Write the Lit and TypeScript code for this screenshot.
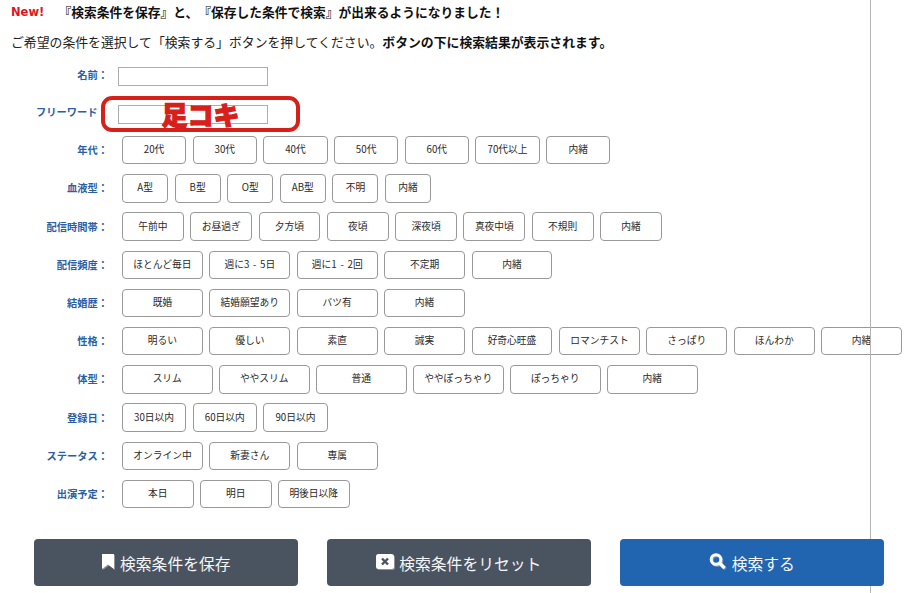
import { LitElement, css, html, svg } from 'lit';
import { customElement } from 'lit/decorators.js';

// each row's chip width lives in a class (w46 etc.), the widths differ per row
const rows = [
  { label: '年代：', size: 'w64', chips: ['20代', '30代', '40代', '50代', '60代', '70代以上', '内緒'] },
  { label: '血液型：', size: 'w46', chips: ['A型', 'B型', 'O型', 'AB型', '不明', '内緒'] },
  { label: '配信時間帯：', size: 'w62', chips: ['午前中', 'お昼過ぎ', '夕方頃', '夜頃', '深夜頃', '真夜中頃', '不規則', '内緒'] },
  { label: '配信頻度：', size: 'w81', chips: ['ほとんど毎日', '週に3 - 5日', '週に1 - 2回', '不定期', '内緒'] },
  { label: '結婚歴：', size: 'w81', chips: ['既婚', '結婚願望あり', 'バツ有', '内緒'] },
  { label: '性格：', size: 'w81', chips: ['明るい', '優しい', '素直', '誠実', '好奇心旺盛', 'ロマンチスト', 'さっぱり', 'ほんわか', '内緒'] },
  { label: '体型：', size: 'w90', chips: ['スリム', 'ややスリム', '普通', 'ややぽっちゃり', 'ぽっちゃり', '内緒'] },
  { label: '登録日：', size: 'w64', chips: ['30日以内', '60日以内', '90日以内'] },
  { label: 'ステータス：', size: 'w81', chips: ['オンライン中', '新妻さん', '専属'] },
  { label: '出演予定：', size: 'w71', chips: ['本日', '明日', '明後日以降'] },
];

const bookmarkIcon = svg`<svg class="icon" width="14" height="15" viewBox="0 0 14 15"><path d="M1 0H13V15L7 10.5L1 15Z" fill="#fff"/></svg>`;
const resetIcon = svg`<svg class="icon" width="18" height="15" viewBox="0 0 18 15"><rect x="0" y="0" width="18" height="15" rx="2.5" fill="#fff"/><path d="M6 4.5L12 10.5M12 4.5L6 10.5" stroke="#4a5360" stroke-width="2.4"/></svg>`;
const searchIcon = svg`<svg class="icon" width="18" height="16" viewBox="0 0 18 16"><circle cx="7" cy="6.5" r="4.8" fill="none" stroke="#fff" stroke-width="3"/><path d="M10.5 10L15.5 15" stroke="#fff" stroke-width="3.4"/></svg>`;

@customElement('app-root')
export class AppRoot extends LitElement {
  static styles = css`
    :host {
      display: block;
      position: relative;
      height: 593px;
      overflow: hidden;
      background: #fff;
      font-family: "Noto Sans CJK JP", "Liberation Sans", sans-serif;
      color: #222;
      text-spacing-trim: space-all;
    }

    .rule {
      position: absolute;
      left: 870px;
      top: 0;
      bottom: 0;
      width: 1px;
      background: #b4b4b4;
    }

    .intro {
      display: flex;
      align-items: center;
      height: 16px;
      margin: 4px 0 14px 11px;
      font-size: 12.75px;
      line-height: 16px;
      white-space: nowrap;
    }

    .intro b {
      font-weight: 700;
      color: #111;
    }

    .new {
      width: 47.5px;
      font-family: "DejaVu Sans", sans-serif;
      font-size: 11.5px;
      font-weight: 700;
      color: #e0141c;
    }

    .lead {
      height: 16px;
      margin: 0 0 17px 11px;
      font-size: 12.85px;
      line-height: 16px;
      white-space: nowrap;
    }

    .lead b {
      font-weight: 700;
      color: #111;
    }

    .form {
      display: flex;
      flex-direction: column;
    }

    .row {
      display: flex;
      align-items: center;
      height: 28.44px;
      margin-bottom: 9.78px;
    }

    .row.field {
      height: 19px;
      margin-bottom: 19px;
    }

    .row.field.last {
      margin-bottom: 12px;
    }

    .label {
      flex: none;
      width: 108px;
      box-sizing: border-box;
      text-align: right;
      font-size: 10.25px;
      line-height: 14px;
      font-weight: 700;
      color: #2a5fa8;
      white-space: nowrap;
    }

    .label.bare {
      padding-right: 10.5px;
    }

    .row.field .label {
      position: relative;
      top: -2px;
    }

    .row.field .label.bare {
      top: -3px;
    }

    input {
      width: 150px;
      height: 19px;
      box-sizing: border-box;
      margin: 0 0 0 10px;
      padding: 0;
      border: 1px solid #adadad;
      background: #fff;
      outline: none;
    }

    .chips {
      display: flex;
      gap: 6.5px;
      margin-left: 14px;
    }

    .chip {
      flex: none;
      height: 28.44px;
      box-sizing: border-box;
      display: flex;
      align-items: center;
      justify-content: center;
      padding-bottom: 2px;
      border: 1px solid #999;
      border-radius: 4px;
      font-size: 9.75px;
      word-spacing: 1.5px;
      color: #2a2a2a;
      white-space: nowrap;
    }

    .w46 .chip { width: 46.1px; }
    .w62 .chip { width: 61.8px; }
    .w64 .chip { width: 64.2px; }
    .w71 .chip { width: 71.5px; }
    .w81 .chip { width: 80.9px; }
    .w90 .chip { width: 90.5px; }

    .actions {
      display: flex;
      gap: 29.4px;
      margin: 21px 0 0 34px;
    }

    .action {
      position: relative;
      display: flex;
      align-items: center;
      justify-content: center;
      gap: 5px;
      width: 263.6px;
      height: 47px;
      box-sizing: border-box;
      border-radius: 4px;
      background: #4a5360;
      color: #f4f5f6;
      font-size: 15.8px;
    }

    .action.primary {
      background: #2164b0;
    }

    .action span {
      position: relative;
      top: 1px;
    }

    .icon {
      flex: none;
      margin-top: -3px;
      filter: drop-shadow(1px 1px 0 rgba(190, 190, 190, 0.6));
    }

    .callout {
      position: absolute;
      left: 101px;
      top: 96px;
      width: 199px;
      height: 36px;
      box-sizing: border-box;
      display: flex;
      align-items: center;
      justify-content: center;
      border: 4px solid #d8201a;
      border-radius: 11px;
      font-size: 26px;
      line-height: 1;
      font-weight: 900;
      color: #d8201a;
      -webkit-text-stroke: 1.2px #d8201a;
    }
  `;

  renderChipRow(row: { label: string; size: string; chips: string[] }) {
    return html`
      <div class="row ${row.size}">
        <div class="label">${row.label}</div>
        <div class="chips">
          ${row.chips.map((chip) => html`<div class="chip">${chip}</div>`)}
        </div>
      </div>
    `;
  }

  render() {
    return html`
      <div class="rule"></div>
      <div class="intro" lang="ja">
        <span class="new">New!</span>
        <b>『検索条件を保存』と、『保存した条件で検索』が出来るようになりました！</b>
      </div>
      <div class="lead" lang="ja">
        ご希望の条件を選択して「検索する」ボタンを押してください。<b>ボタンの下に検索結果が表示されます。</b>
      </div>
      <div class="form" lang="ja">
        <div class="row field">
          <div class="label">名前：</div>
          <input type="text" />
        </div>
        <div class="row field last">
          <div class="label bare">フリーワード</div>
          <input type="text" />
        </div>
        ${rows.map((row) => this.renderChipRow(row))}
      </div>
      <div class="actions" lang="ja">
        <div class="action">${bookmarkIcon}<span>検索条件を保存</span></div>
        <div class="action">${resetIcon}<span>検索条件をリセット</span></div>
        <div class="action primary">${searchIcon}<span>検索する</span></div>
      </div>
      <div class="callout" lang="ja">足コキ</div>
    `;
  }
}
